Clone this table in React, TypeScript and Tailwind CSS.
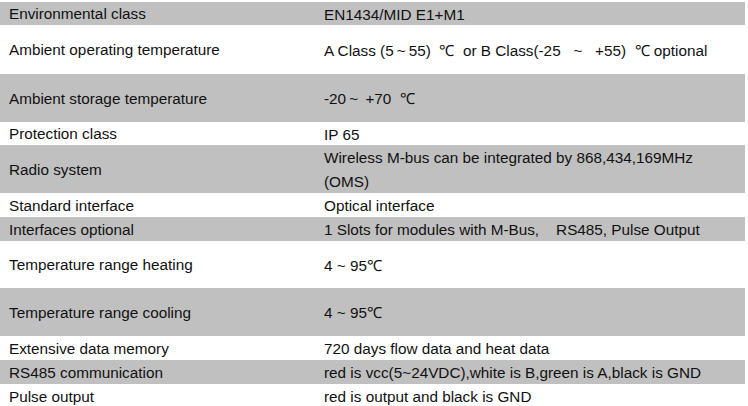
const rows: { label: string; value: string[]; h: string; gray: boolean }[] = [
  { label: 'Environmental class', value: ['EN1434/MID E1+M1'], h: 'h-[23px]', gray: true },
  { label: 'Ambient operating temperature', value: ['A Class (5\u2009~\u200955)  ℃  or B Class(-25   ~   +55)  ℃ optional'], h: 'h-[49px]', gray: false },
  { label: 'Ambient storage temperature', value: ['-20\u2009~\u2009 +70  ℃'], h: 'h-[48px]', gray: true },
  { label: 'Protection class', value: ['IP 65'], h: 'h-[23px]', gray: false },
  { label: 'Radio system', value: ['Wireless M-bus can be integrated by 868,434,169MHz', '(OMS)'], h: 'h-[48px]', gray: true },
  { label: 'Standard interface', value: ['Optical interface'], h: 'h-[24px]', gray: false },
  { label: 'Interfaces optional', value: ['1 Slots for modules with M-Bus,    RS485, Pulse Output'], h: 'h-[24px]', gray: true },
  { label: 'Temperature range heating', value: ['4 ~ 95℃'], h: 'h-[47px]', gray: false },
  { label: 'Temperature range cooling', value: ['4 ~ 95℃'], h: 'h-[48px]', gray: true },
  { label: 'Extensive data memory', value: ['720 days flow data and heat data'], h: 'h-[24px]', gray: false },
  { label: 'RS485 communication', value: ['red is vcc(5~24VDC),white is B,green is A,black is GND'], h: 'h-[24px]', gray: true },
  { label: 'Pulse output', value: ['red is output and black is GND'], h: 'h-[24px]', gray: false },
];

export default function App() {
  return (
    <div className="w-[748px] h-[406px] overflow-hidden bg-white pt-[2px] text-[15.3px] text-[#111] font-['Liberation_Sans',Arial,sans-serif]">
      <div className="w-[745px] flex flex-col">
        {rows.map((r) => (
          <div key={r.label} className={`flex items-center pt-[2px] ${r.h} ${r.gray ? 'bg-[#c0c0c0]' : 'bg-white'}`}>
            <div className="w-[315px] pl-[9px] whitespace-pre">{r.label}</div>
            <div className="flex-1 pl-[9px] flex flex-col leading-[24px]">
              {r.value.map((v) => (
                <span key={v} className="whitespace-pre">{v}</span>
              ))}
            </div>
          </div>
        ))}
      </div>
    </div>
  );
}
